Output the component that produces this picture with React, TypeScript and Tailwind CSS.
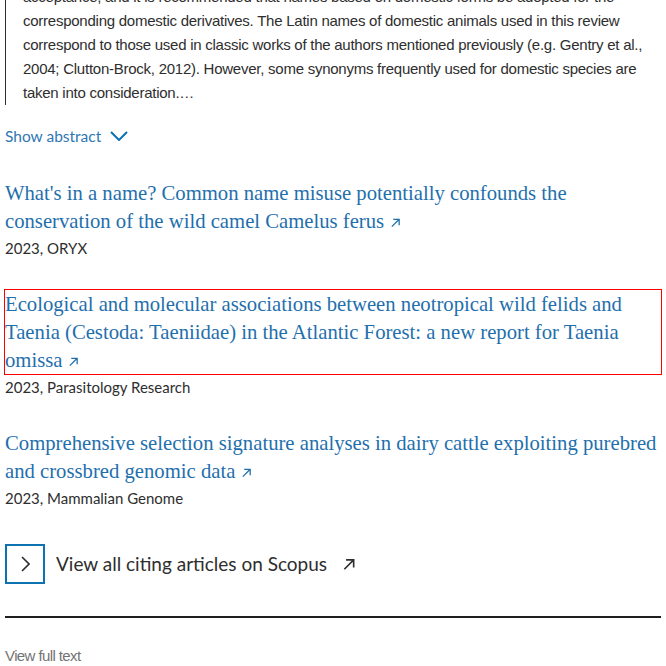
const serif = "font-['Liberation_Serif',serif]";
const narrow = "font-['Liberation_Sans',sans-serif]";

function ArrowUpRight({ className }: { className?: string }) {
  return (
    <svg viewBox="0 0 12 12" className={className} fill="none" stroke="currentColor" strokeWidth={1.4}>
      <path d="M2 10.5 10 2.5M3.5 2.5H10V9" />
    </svg>
  );
}

const abstractLines = [
  "acceptance, and it is recommended that names based on domestic forms be adopted for the",
  "corresponding domestic derivatives. The Latin names of domestic animals used in this review",
  "correspond to those used in classic works of the authors mentioned previously (e.g. Gentry et al.,",
  "2004; Clutton-Brock, 2012). However, some synonyms frequently used for domestic species are",
  "taken into consideration.…",
];

const articles = [
  {
    lines: ["What's in a name? Common name misuse potentially confounds the", "conservation of the wild camel Camelus ferus"],
    source: "2023, ORYX",
  },
  {
    lines: [
      "Ecological and molecular associations between neotropical wild felids and",
      "Taenia (Cestoda: Taeniidae) in the Atlantic Forest: a new report for Taenia",
      "omissa",
    ],
    source: "2023, Parasitology Research",
    focused: true,
  },
  {
    lines: ["Comprehensive selection signature analyses in dairy cattle exploiting purebred", "and crossbred genomic data"],
    source: "2023, Mammalian Genome",
  },
];

export default function App() {
  return (
    <div className="h-[666px] w-[666px] overflow-hidden bg-white">
      <div className="-mt-[15px] px-[5px]">
        <div className={`border-l border-[#2e2e2e] pl-[17px] text-[15px] leading-[24px] tracking-[-0.25px] text-[#2e2e2e] ${narrow}`}>
          {abstractLines.map((l) => (
            <span key={l} className="block whitespace-nowrap">
              {l}
            </span>
          ))}
        </div>

        <button className="mt-[19px] flex items-center gap-[9px] font-['Lato',sans-serif] text-[15.5px] leading-[24px] text-[#2f77b3]">
          Show abstract
          <svg viewBox="0 0 18 10" className="h-[10px] w-[18px]" fill="none" stroke="#0c72b0" strokeWidth={2}>
            <path d="M1 1l8 8 8-8" />
          </svg>
        </button>

        <ul className="mt-[31px] flex flex-col gap-[32px]">
          {articles.map((a) => (
            <li key={a.source}>
              <a
                href="#"
                className={`block text-[20.7px] leading-[28px] text-[#1f6fad] ${serif} ${
                  a.focused ? "outline outline-1 outline-[#ff0000]" : ""
                }`}
              >
                {a.lines.map((l, i) => (
                  <span key={l} className="block whitespace-nowrap">
                    {l}
                    {i === a.lines.length - 1 && (
                      <ArrowUpRight className="ml-[6px] inline-block h-[11px] w-[11px] align-baseline" />
                    )}
                  </span>
                ))}
              </a>
              <div className="mt-[3px] font-['Lato',sans-serif] text-[15px] leading-[20px] text-[#2e2e2e]">
                {a.source}
              </div>
            </li>
          ))}
        </ul>

        <a href="#" className="mt-[36px] flex items-center gap-[11px] font-['Lato',sans-serif] text-[19px] text-[#2e2e2e]">
          <span className="flex h-[40px] w-[40px] items-center justify-center border-2 border-[#0c72b0]">
            <svg viewBox="0 0 10 16" className="h-[16px] w-[10px]" fill="none" stroke="#2e2e2e" strokeWidth={1.6}>
              <path d="M2 1l7 7-7 7" />
            </svg>
          </span>
          <span>View all citing articles on Scopus</span>
          <ArrowUpRight className="ml-[4px] h-[14px] w-[14px]" />
        </a>

        <hr className="mt-[32px] border-t-2 border-[#1f1f1f]" />

        <a
          href="#"
          className={`mt-[28px] block text-[15px] leading-[20px] tracking-[-0.6px] text-[#737373] ${narrow}`}
        >
          View full text
        </a>
      </div>
    </div>
  );
}
